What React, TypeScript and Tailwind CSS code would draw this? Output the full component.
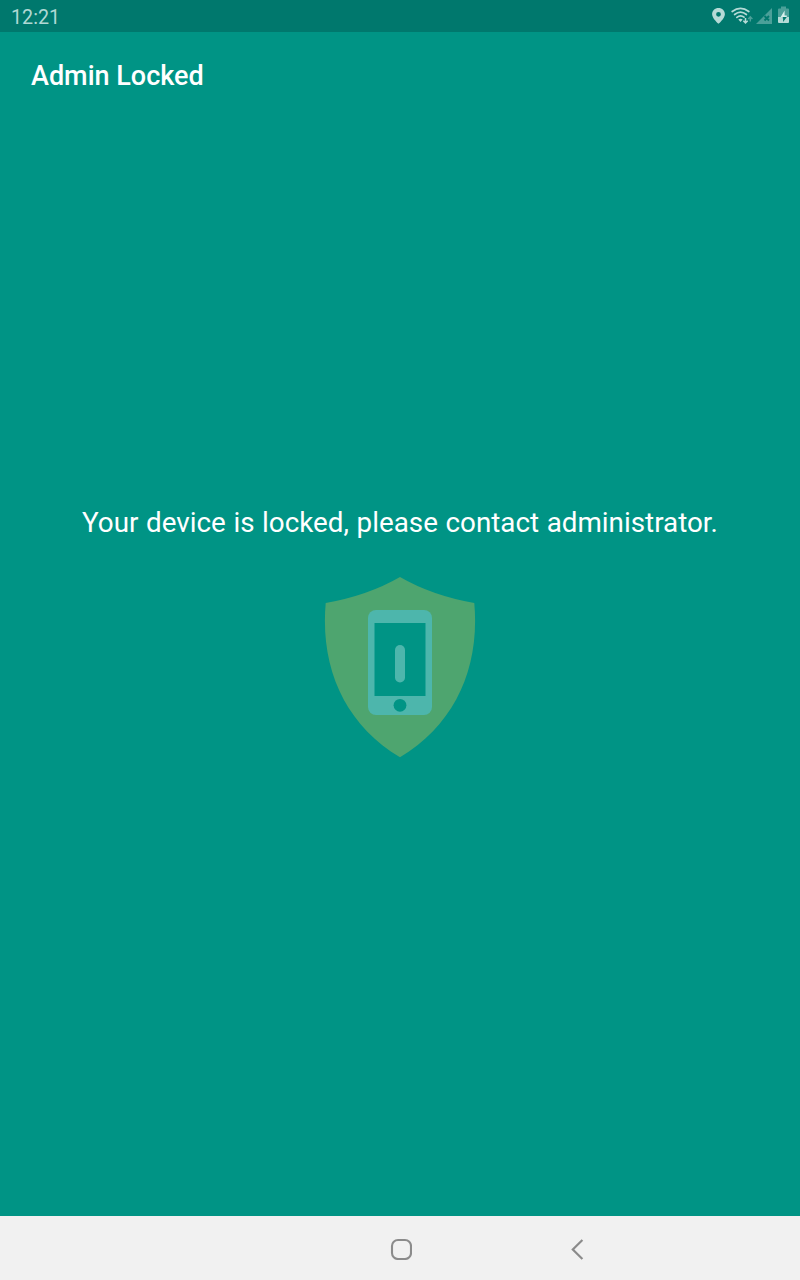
const StatusIcons = () => (
  <svg width="80" height="20" viewBox="710 6 80 20" fill="none" aria-hidden="true">
    <path fillRule="evenodd" fill="#b5dad6" d="M718.5 8c-3.6 0-6.4 2.700-6.400 6.200 0 4.200 6.400 9.600 6.400 9.600s6.400-5.400 6.400-9.600c0-3.500-2.800-6.200-6.400-6.200zm0 3.900a2.400 2.400 0 1 1 0 4.800 2.400 2.400 0 0 1 0-4.800z" />
    <g stroke="#b5dad6" strokeWidth="1.700" strokeLinecap="round">
      <path d="M732.200 11.500Q740.500 5.300 748.800 11.500" />
      <path d="M734.600 14.500Q740.500 9.800 746.400 14.500" />
      <path d="M736.900 17.400Q740.500 14.500 744 17.200" />
    </g>
    <path fill="#b5dad6" d="M738.300 19.400q2.200-1.500 4.400 0l-2.200 2.500z" />
    <path stroke="#b5dad6" strokeWidth="1.500" d="M745.500 18v4.800M743.300 20.700l2.200 2.200 2.200-2.200" />
    <path stroke="#4ba099" strokeWidth="1.400" d="M750.300 21.500v-4.600M748.200 19l2.100-2.200 2.100 2.200" />
    <path fill="#4ba099" d="M772 8v16h-16z" />
    <path stroke="#00786d" strokeWidth="1.900" d="m764.500 16 4.500 4.500m0-4.500-4.500 4.500" />
    <path fill="#4ba099" d="M781 6.500h5v2h2q1 0 1 1v8h-11v-8q0-1 1-1h2z" />
    <path fill="#b5dad6" d="M778 17h11v5q0 1-1 1h-9q-1 0-1-1z" />
    <path fill="#d8efec" d="m784.600 10.500-3.900 6.500h6.100v-1.500h-2.200z" />
    <path fill="#00786d" d="M782.800 17h4l-3.700 5v-3.500h-.300z" />
  </svg>
);

const ShieldIcon = () => (
  <svg className="mt-[36px]" width="152" height="182" viewBox="324 576 152 182" aria-hidden="true">
    <path fill="#4ea56f" d="M400 577Q432 595.500 474.300 603C480 668 455 724 400 757.300C345 724 320 668 325.700 603Q368 595.500 400 577Z" />
    <rect x="368" y="610" width="64" height="105" rx="8" fill="#4db6ac" />
    <path fill="#009485" d="M374.500 623h51v73h-51z" />
    <rect x="395" y="645" width="10" height="37.500" rx="5" fill="#4db6ac" />
    <circle cx="400" cy="705.300" r="6.400" fill="#009485" />
  </svg>
);

export default function App() {
  return (
    <div className="flex h-[1280px] w-[800px] flex-col overflow-hidden bg-[#009485] font-['Roboto',sans-serif]">
      <header className="flex h-8 shrink-0 items-center justify-between bg-[#00786d] pr-[10px] pl-[11px] text-[19.700px] text-[#b0d8d4]">
        <span className="pt-[4px] leading-6">12:21</span>
        <StatusIcons />
      </header>
      <h1 className="pt-[28px] pl-[31px] text-[27px] leading-8 font-medium text-white">Admin Locked</h1>
      <main className="flex flex-1 flex-col items-center pt-[414px]">
        <p className="text-[27.800px] leading-[34px] [word-spacing:0.7px] whitespace-nowrap text-white">
          Your device is locked, please contact administrator.
        </p>
        <ShieldIcon />
      </main>
      <nav className="flex h-16 shrink-0 items-center bg-[#f1f1f1] pt-[2px] pl-[390px]">
        <button className="flex" aria-label="Home">
          <svg width="22" height="22" viewBox="0 0 22 22" fill="none">
            <rect x="2" y="2" width="19" height="19" rx="6" stroke="#8b8b8b" strokeWidth="2.100" />
          </svg>
        </button>
        <button className="ml-[158px] flex" aria-label="Back">
          <svg width="16" height="22" viewBox="0 0 16 22" fill="none">
            <path d="M12.400 2 2.800 11.500l9.600 9.500" stroke="#8b8b8b" strokeWidth="2.200" />
          </svg>
        </button>
      </nav>
    </div>
  );
}
